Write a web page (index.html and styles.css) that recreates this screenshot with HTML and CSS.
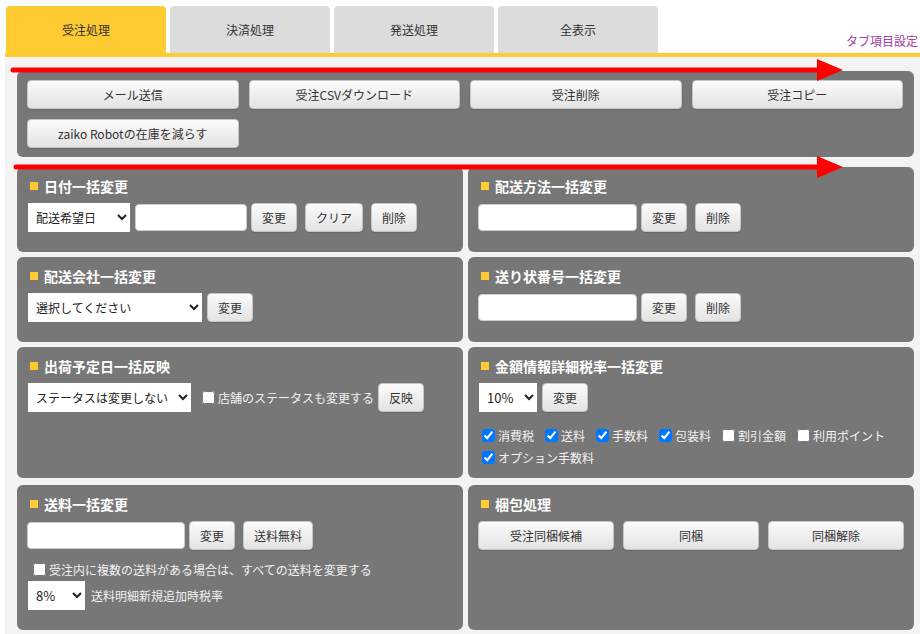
FILE: index.html
```html
<!DOCTYPE html>
<html lang="ja">
<head>
<meta charset="utf-8">
<title>受注処理</title>
<link rel="stylesheet" href="styles.css">
</head>
<body>
<div class="page">
  <div class="tabbar">
    <div class="tab active">受注処理</div>
    <div class="tab">決済処理</div>
    <div class="tab">発送処理</div>
    <div class="tab">全表示</div>
    <a class="tab-setting" href="#">タブ項目設定</a>
  </div>
  <div class="content">
    <div class="actions">
      <button class="btn">メール送信</button>
      <button class="btn">受注CSVダウンロード</button>
      <button class="btn">受注削除</button>
      <button class="btn">受注コピー</button>
      <button class="btn">zaiko Robotの在庫を減らす</button>
    </div>
    <div class="sections">
      <section class="box">
        <h3 class="box-title">日付一括変更</h3>
        <div class="ctrl-row">
          <select class="sel w-date"><option>配送希望日</option></select>
          <input class="txt w-112" type="text">
          <button class="btn">変更</button>
          <button class="btn ml">クリア</button>
          <button class="btn ml">削除</button>
        </div>
      </section>
      <section class="box">
        <h3 class="box-title">配送方法一括変更</h3>
        <div class="ctrl-row">
          <input class="txt w-159" type="text">
          <button class="btn">変更</button>
          <button class="btn ml">削除</button>
        </div>
      </section>
      <section class="box">
        <h3 class="box-title">配送会社一括変更</h3>
        <div class="ctrl-row">
          <select class="sel w-company"><option>選択してください</option></select>
          <button class="btn">変更</button>
        </div>
      </section>
      <section class="box">
        <h3 class="box-title">送り状番号一括変更</h3>
        <div class="ctrl-row">
          <input class="txt w-159" type="text">
          <button class="btn">変更</button>
          <button class="btn ml">削除</button>
        </div>
      </section>
      <section class="box">
        <h3 class="box-title">出荷予定日一括反映</h3>
        <div class="ctrl-row">
          <select class="sel w-status"><option>ステータスは変更しない</option></select>
          <label class="chk chk-inline"><input type="checkbox">店舗のステータスも変更する</label>
          <button class="btn">反映</button>
        </div>
      </section>
      <section class="box">
        <h3 class="box-title">金額情報詳細税率一括変更</h3>
        <div class="ctrl-row">
          <select class="sel pct w-60"><option>10%</option></select>
          <button class="btn">変更</button>
        </div>
        <div class="chk-group">
          <div class="chk-line">
            <label class="chk"><input type="checkbox" checked>消費税</label>
            <label class="chk"><input type="checkbox" checked>送料</label>
            <label class="chk"><input type="checkbox" checked>手数料</label>
            <label class="chk"><input type="checkbox" checked>包装料</label>
            <label class="chk"><input type="checkbox">割引金額</label>
            <label class="chk"><input type="checkbox">利用ポイント</label>
          </div>
          <div class="chk-line">
            <label class="chk"><input type="checkbox" checked>オプション手数料</label>
          </div>
        </div>
      </section>
      <section class="box box-last">
        <h3 class="box-title">送料一括変更</h3>
        <div class="ctrl-row mb-sm">
          <input class="txt w-158" type="text">
          <button class="btn">変更</button>
          <button class="btn ml">送料無料</button>
        </div>
        <div class="chk-line">
          <label class="chk chk-wide"><input type="checkbox">受注内に複数の送料がある場合は、すべての送料を変更する</label>
        </div>
        <div class="ctrl-row">
          <select class="sel pct w-59"><option>8%</option></select>
          <span class="note">送料明細新規追加時税率</span>
        </div>
      </section>
      <section class="box box-last">
        <h3 class="box-title">梱包処理</h3>
        <div class="pack-grid">
          <button class="btn">受注同梱候補</button>
          <button class="btn">同梱</button>
          <button class="btn">同梱解除</button>
        </div>
      </section>
    </div>
  </div>
</div>
<svg class="annot" width="860" height="190" viewBox="0 0 860 190" aria-hidden="true">
  <line x1="13" y1="70" x2="820" y2="70" stroke="#ff0000" stroke-width="5" stroke-linecap="round"/>
  <polygon points="817,59 843,70 817,81" fill="#ff0000"/>
  <line x1="16" y1="167" x2="820" y2="167" stroke="#ff0000" stroke-width="5" stroke-linecap="round"/>
  <polygon points="817,156 843,167 817,178" fill="#ff0000"/>
</svg>
</body>
</html>
```

FILE: styles.css
```css
* {
  box-sizing: border-box;
}

html,
body {
  margin: 0;
  padding: 0;
  background: #fff;
}

body {
  position: relative;
  width: 920px;
  height: 634px;
  overflow: hidden;
  font-family: "Noto Sans CJK JP", "Noto Sans", "Liberation Sans", sans-serif;
  font-size: 12px;
  color: #333;
}

.page {
  margin-left: 5px;
}

/* ---------- tabs ---------- */
.tabbar {
  display: flex;
  align-items: flex-end;
  height: 57px;
  padding: 6px 2px 0 1px;
  border-bottom: 4px solid #ffcb32;
}

.tab {
  width: 160px;
  height: 47px;
  margin-right: 4px;
  display: flex;
  align-items: center;
  justify-content: center;
  background: #dcdcdc;
  border-radius: 4px 4px 0 0;
  font-size: 12px;
  color: #333;
}

.tab.active {
  background: #ffcb32;
}

.tab-setting {
  margin-left: auto;
  margin-bottom: 3px;
  font-size: 12px;
  line-height: 18px;
  color: #a0409f;
  text-decoration: none;
}

/* ---------- content ---------- */
.content {
  height: 577px;
  padding: 14px 6px 0 12px;
  background: #f3f3f3;
}

.actions {
  display: grid;
  grid-template-columns: repeat(4, 1fr);
  gap: 10px;
  padding: 9px 11px 9px 10px;
  background: #777;
  border-radius: 6px;
}

.btn {
  height: 29px;
  padding: 0 10px;
  font-family: inherit;
  font-size: 12px;
  line-height: 1;
  color: #333;
  white-space: nowrap;
  background: linear-gradient(#fbfbfb, #e3e3e3);
  border: 1px solid #c6c6c6;
  border-radius: 4px;
  box-shadow: 0 1px 1px rgba(0, 0, 0, 0.12);
}

.actions .btn,
.pack-grid .btn {
  width: 100%;
}

.ml {
  margin-left: 4px;
}

.sections {
  display: grid;
  grid-template-columns: 446px 446px;
  gap: 5px;
  margin-top: 10px;
}

.box {
  padding: 9px 10px 8px;
  background: #777;
  border-radius: 6px;
}

.box-last {
  margin-top: 2px;
}

.box-title {
  display: flex;
  align-items: center;
  margin: 0 0 6px;
  padding-left: 3px;
  font-size: 14px;
  font-weight: bold;
  line-height: 20px;
  color: #fff;
}

.box-title::before {
  content: "";
  width: 8px;
  height: 8px;
  margin-right: 6px;
  background: #ffcb32;
}

.ctrl-row {
  display: flex;
  align-items: center;
  gap: 4px;
  height: 31px;
  margin-bottom: 11px;
}

.ctrl-row.mb-sm {
  margin-bottom: 7px;
}

.sel {
  height: 31px;
  padding: 0 0 0 4px;
  font-family: inherit;
  font-size: 12px;
  color: #222;
  background: #fff;
  border: 1px solid #777;
  border-radius: 0;
}

.sel.pct {
  font-size: 13px;
}

.w-date { width: 104px; }
.w-company { width: 176px; }
.w-status { width: 165px; }
.w-60 { width: 60px; }
.w-59 { width: 59px; }

.txt {
  height: 27px;
  background: #fff;
  border: 1px solid #ccc;
  border-radius: 4px;
}

.w-112 { width: 112px; }
.w-158 { width: 158px; }
.w-159 { width: 159px; }

.chk-group {
  margin: 3px 0 2px;
}

.chk-line {
  display: flex;
  align-items: center;
  height: 22px;
}

.chk {
  display: inline-flex;
  align-items: center;
  margin-right: 7px;
  font-size: 12px;
  color: #f2f2f2;
  white-space: nowrap;
}

.chk input {
  width: 13px;
  height: 13px;
  margin: 0 3px 0 4px;
  accent-color: #0075ff;
}

.chk-inline,
.chk-wide {
  margin-right: 0;
}

.chk-inline input,
.chk-wide input {
  margin-left: 6px;
}

.note {
  margin-left: 1px;
  font-size: 12px;
  color: #f2f2f2;
}

.pack-grid {
  display: grid;
  grid-template-columns: repeat(3, 1fr);
  gap: 9px;
  height: 31px;
  align-items: center;
}

/* annotation arrows drawn over the screenshot */
.annot {
  position: absolute;
  left: 0;
  top: 0;
  pointer-events: none;
}
```
